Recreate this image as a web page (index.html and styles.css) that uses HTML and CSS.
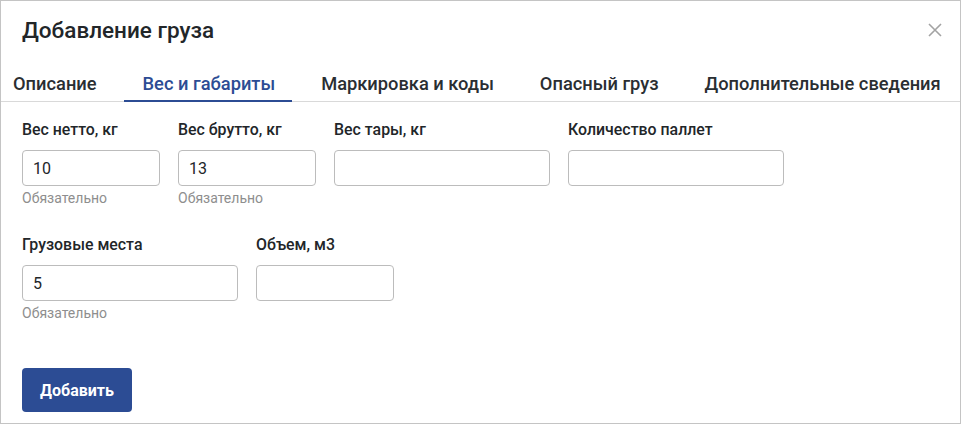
FILE: index.html
```html
<!DOCTYPE html>
<html lang="ru">
  <head>
    <meta charset="UTF-8" />
    <meta name="viewport" content="width=device-width, initial-scale=1.0" />
    <title>Добавление груза</title>
    <link rel="stylesheet" href="styles.css">
  </head>
  <body>
    <div class="modal">
      <div class="modal-header">
        <h2 class="modal-title">Добавление груза</h2>
        <button class="close-button" aria-label="Закрыть">
          <svg width="14" height="14" viewBox="0 0 14 14">
            <path d="M1 1 L13 13 M13 1 L1 13" stroke="#a3a3a3" stroke-width="1.6" fill="none" />
          </svg>
        </button>
      </div>

      <nav class="tabs">
        <a class="tab">Описание</a>
        <a class="tab active">Вес и габариты</a>
        <a class="tab">Маркировка и коды</a>
        <a class="tab">Опасный груз</a>
        <a class="tab">Дополнительные сведения</a>
      </nav>

      <form class="cargo-form">
        <div class="form-row">
          <div class="field small">
            <label>Вес нетто, кг</label>
            <input type="text" value="10" />
            <span class="hint">Обязательно</span>
          </div>
          <div class="field small">
            <label>Вес брутто, кг</label>
            <input type="text" value="13" />
            <span class="hint">Обязательно</span>
          </div>
          <div class="field wide">
            <label>Вес тары, кг</label>
            <input type="text" />
          </div>
          <div class="field wide">
            <label>Количество паллет</label>
            <input type="text" />
          </div>
        </div>

        <div class="form-row">
          <div class="field wide">
            <label>Грузовые места</label>
            <input type="text" value="5" />
            <span class="hint">Обязательно</span>
          </div>
          <div class="field small">
            <label>Объем, м3</label>
            <input type="text" />
          </div>
        </div>

        <button type="button" class="submit-button">Добавить</button>
      </form>
    </div>
  </body>
</html>
```

FILE: styles.css
```css
* {
  box-sizing: border-box;
}

body {
  margin: 0;
  font-family: Roboto, "Noto Sans", Arial, sans-serif;
  color: #222629;
  background: #fff;
}

.modal {
  width: 961px;
  height: 424px;
  border: 1px solid #c4c4c4;
  background: #fff;
  overflow: hidden;
}

.modal-header {
  display: flex;
  justify-content: space-between;
  align-items: center;
  padding: 16px 18px 0 21px;
}

.modal-title {
  margin: 0;
  font-size: 22.5px;
  line-height: 26px;
  font-weight: 500;
}

.close-button {
  border: none;
  background: none;
  padding: 0;
  width: 14px;
  height: 14px;
  cursor: pointer;
  display: flex;
}

/* Вкладки */
.tabs {
  display: flex;
  margin-top: 31px;
  padding-left: 12px;
  border-bottom: 1px solid #d9d9d9;
}

.tab {
  flex-shrink: 0;
  white-space: nowrap;
  padding: 0 0 6px;
  margin-right: 46px;
  font-size: 18.3px;
  line-height: 20px;
  font-weight: 500;
  color: #2a2e32;
  border-bottom: 2px solid transparent;
  margin-bottom: -1px;
  cursor: pointer;
}

.tab.active {
  color: #2c4c94;
  border-bottom-color: #2c4c94;
  margin-left: -19px;
  margin-right: 29px;
  padding-left: 19px;
  padding-right: 17px;
}

/* Форма */
.cargo-form {
  padding: 19px 21px 0;
}

.form-row {
  display: flex;
  gap: 18px;
  margin-bottom: 30px;
}

.field {
  display: flex;
  flex-direction: column;
}

.field.small {
  width: 138px;
}

.field.wide {
  width: 216px;
}

.field label {
  font-size: 15.9px;
  line-height: 18px;
  font-weight: 500;
  margin-bottom: 11px;
}

.field input {
  height: 36px;
  border: 1px solid #bcbcbc;
  border-radius: 4px;
  padding: 0 10px;
  font-family: inherit;
  font-size: 16px;
  color: #222629;
}

.hint {
  margin-top: 4px;
  font-size: 14px;
  line-height: 16px;
  color: #8e8e8e;
}

.submit-button {
  display: block;
  margin-top: 47px;
  width: 110px;
  height: 44px;
  border: none;
  border-radius: 4px;
  background-color: #2c4c94;
  color: #fff;
  font-family: inherit;
  font-size: 16px;
  font-weight: 700;
  cursor: pointer;
}
```
